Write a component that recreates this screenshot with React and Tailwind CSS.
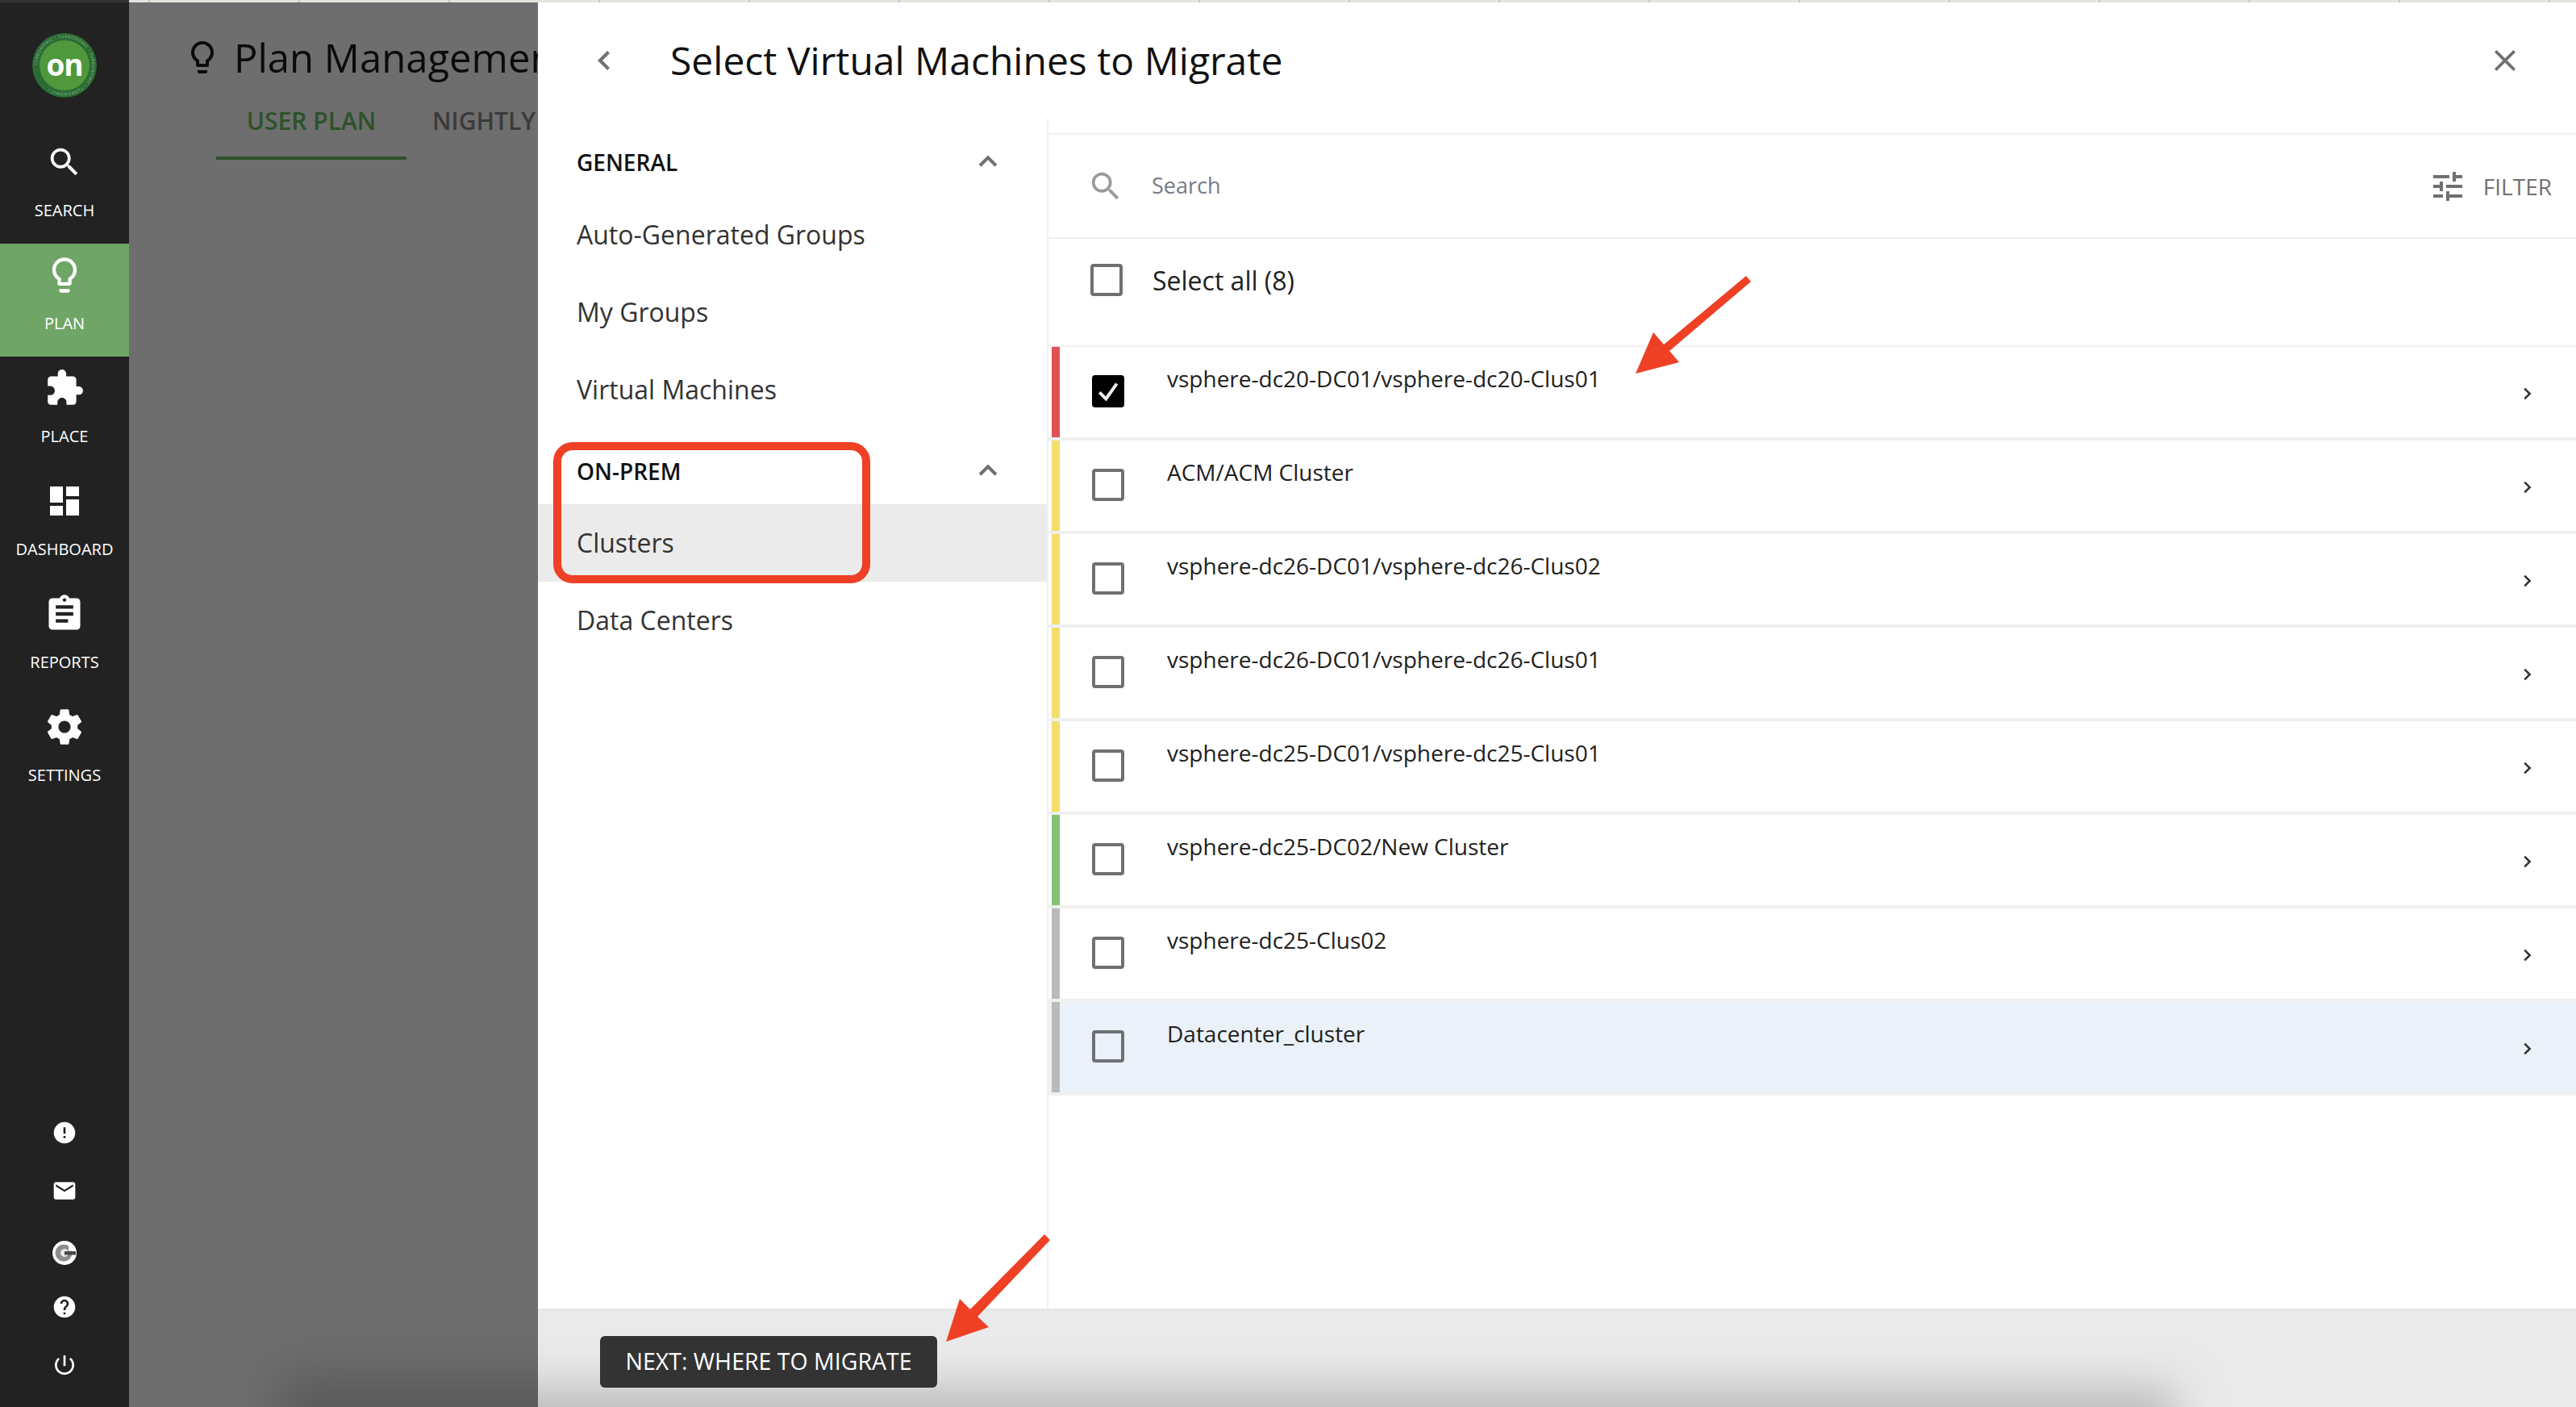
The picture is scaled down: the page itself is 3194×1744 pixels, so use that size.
const OS = { fontFamily: '"Open Sans", sans-serif' };

const P = {
  search: "M15.5 14h-.79l-.28-.27C15.41 12.59 16 11.11 16 9.5 16 5.91 13.09 3 9.5 3S3 5.91 3 9.5 5.91 16 9.5 16c1.61 0 3.09-.59 4.23-1.57l.27.28v.79l5 4.99L20.49 19l-4.99-5zm-6 0C7.01 14 5 11.99 5 9.5S7.01 5 9.5 5 14 7.01 14 9.5 11.99 14 9.5 14z",
  bulb: "M9 21c0 .55.45 1 1 1h4c.55 0 1-.45 1-1v-1H9v1zm3-19C8.14 2 5 5.14 5 9c0 2.38 1.19 4.47 3 5.74V17c0 .55.45 1 1 1h6c.55 0 1-.45 1-1v-2.26c1.81-1.27 3-3.36 3-5.74 0-3.86-3.14-7-7-7zm2.85 11.1l-.85.6V16h-4v-2.3l-.85-.6C7.8 12.16 7 10.63 7 9c0-2.76 2.24-5 5-5s5 2.24 5 5c0 1.63-.8 3.16-2.15 4.1z",
  puzzle: "M20.5 11H19V7c0-1.1-.9-2-2-2h-4V3.5C13 2.12 11.88 1 10.5 1S8 2.12 8 3.5V5H4c-1.1 0-1.99.9-1.99 2v3.8H3.5c1.49 0 2.7 1.21 2.7 2.7s-1.21 2.7-2.7 2.7H2V20c0 1.1.9 2 2 2h3.8v-1.5c0-1.49 1.21-2.7 2.7-2.7 1.49 0 2.7 1.21 2.7 2.7V22H17c1.1 0 2-.9 2-2v-4h1.5c1.38 0 2.5-1.12 2.5-2.5S21.88 11 20.5 11z",
  dash: "M3 13h8V3H3v10zm0 8h8v-6H3v6zm10 0h8V11h-8v10zm0-18v6h8V3h-8z",
  report: "M19 3h-4.18C14.4 1.84 13.3 1 12 1c-1.3 0-2.4.84-2.82 2H5c-1.1 0-2 .9-2 2v14c0 1.1.9 2 2 2h14c1.1 0 2-.9 2-2V5c0-1.1-.9-2-2-2zm-7 0c.55 0 1 .45 1 1s-.45 1-1 1-1-.45-1-1 .45-1 1-1zm2 14H7v-2h7v2zm3-4H7v-2h10v2zm0-4H7V7h10v2z",
  gear: "M19.43 12.98c.04-.32.07-.64.07-.98s-.03-.66-.07-.98l2.11-1.65c.19-.15.24-.42.12-.64l-2-3.46c-.12-.22-.39-.3-.61-.22l-2.49 1c-.52-.4-1.08-.73-1.69-.98l-.38-2.65C14.46 2.18 14.25 2 14 2h-4c-.25 0-.46.18-.49.42l-.38 2.65c-.61.25-1.17.59-1.69.98l-2.49-1c-.23-.09-.49 0-.61.22l-2 3.46c-.13.22-.07.49.12.64l2.11 1.65c-.04.32-.07.65-.07.98s.03.66.07.98l-2.11 1.65c-.19.15-.24.42-.12.64l2 3.46c.12.22.39.3.61.22l2.49-1c.52.4 1.08.73 1.69.98l.38 2.65c.03.24.24.42.49.42h4c.25 0 .46-.18.49-.42l.38-2.65c.61-.25 1.17-.59 1.69-.98l2.49 1c.23.09.49 0 .61-.22l2-3.46c.12-.22.07-.49-.12-.64l-2.11-1.65zM12 15.5c-1.93 0-3.5-1.57-3.5-3.5s1.57-3.5 3.5-3.5 3.5 1.57 3.5 3.5-1.57 3.5-3.5 3.5z",
  error: "M12 2C6.48 2 2 6.48 2 12s4.48 10 10 10 10-4.48 10-10S17.52 2 12 2zm1 15h-2v-2h2v2zm0-4h-2V7h2v6z",
  mail: "M20 4H4c-1.1 0-1.99.9-1.99 2L2 18c0 1.1.9 2 2 2h16c1.1 0 2-.9 2-2V6c0-1.1-.9-2-2-2zm0 4l-8 5-8-5V6l8 5 8-5v2z",
  help: "M12 2C6.48 2 2 6.48 2 12s4.48 10 10 10 10-4.48 10-10S17.52 2 12 2zm1 17h-2v-2h2v2zm2.07-7.75l-.9.92C13.45 12.9 13 13.5 13 15h-2v-.5c0-1.1.45-2.1 1.17-2.83l1.24-1.26c.37-.36.59-.86.59-1.41 0-1.1-.9-2-2-2s-2 .9-2 2H8c0-2.21 1.79-4 4-4s4 1.79 4 4c0 .88-.36 1.68-.93 2.25z",
  power: "M13 3h-2v10h2V3zm4.83 2.17l-1.42 1.42C17.99 7.86 19 9.81 19 12c0 3.87-3.13 7-7 7s-7-3.13-7-7c0-2.19 1.01-4.14 2.58-5.42L6.17 5.17C4.23 6.82 3 9.26 3 12c0 4.97 4.03 9 9 9s9-4.03 9-9c0-2.74-1.23-5.18-3.17-6.83z",
  tune: "M3 17v2h6v-2H3zM3 5v2h10V5H3zm10 16v-2h8v-2h-8v-2h-2v6h2zM7 9v2H3v2h4v2h2V9H7zm14 4v-2H11v2h10zm-6-4h2V7h4V5h-4V3h-2v6z",
};

function Ic({ d, size, className }) {
  return (
    <svg width={size} height={size} viewBox="0 0 24 24" fill="currentColor" className={`shrink-0 ${className || ""}`}>
      <path d={d} />
    </svg>
  );
}

function Chevron({ dir, size = 24, className }) {
  const pts = { left: "15,5 8,12 15,19", right: "9,5 16,12 9,19", up: "5,15 12,8 19,15" }[dir];
  return (
    <svg width={size} height={size} viewBox="0 0 24 24" fill="none" stroke="currentColor" strokeWidth="2.8" className={`shrink-0 ${className || ""}`}>
      <polyline points={pts} />
    </svg>
  );
}

function Logo() {
  return (
    <svg width="84" height="84" viewBox="0 0 84 84" className="block">
      <defs>
        <path id="ringp" d="M42 42 m-34 0 a34 34 0 1 1 68 0 a34 34 0 1 1 -68 0" />
      </defs>
      <circle cx="42" cy="42" r="40" fill="#2c6b35" />
      <circle cx="42" cy="42" r="31" fill="#4f983c" />
      <text fontSize="5" fill="#8fbe8e" letterSpacing="0.6" style={OS}>
        <textPath href="#ringp">TURBONOMIC • TURBONOMIC • TURBONOMIC • TURBONOMIC •</textPath>
      </text>
      <text x="42" y="55" textAnchor="middle" fontSize="37" fontWeight="700" letterSpacing="-1" fill="#fff" style={OS}>on</text>
    </svg>
  );
}

function NavItem({ d, label, size = 44, active }) {
  return (
    <div className={`h-[140px] flex flex-col items-center pt-[13px] text-white ${active ? "bg-[#6fa566]" : ""}`}>
      <div className="h-[52px] flex items-center justify-center"><Ic d={d} size={size} /></div>
      <div className="mt-[20px] text-[20px] leading-[28px]">{label}</div>
    </div>
  );
}

const rows = [
  ["vsphere-dc20-DC01/vsphere-dc20-Clus01", "bg-[#dc5350]", true],
  ["ACM/ACM Cluster", "bg-[#f3de6d]"],
  ["vsphere-dc26-DC01/vsphere-dc26-Clus02", "bg-[#f3de6d]"],
  ["vsphere-dc26-DC01/vsphere-dc26-Clus01", "bg-[#f3de6d]"],
  ["vsphere-dc25-DC01/vsphere-dc25-Clus01", "bg-[#f3de6d]"],
  ["vsphere-dc25-DC02/New Cluster", "bg-[#84c174]"],
  ["vsphere-dc25-Clus02", "bg-[#bababa]"],
  ["Datacenter_cluster", "bg-[#bababa]", false, true],
];

function Check({ checked }) {
  if (checked) {
    return (
      <div className="w-[40px] h-[40px] rounded-[4px] bg-black flex items-center justify-center">
        <svg width="32" height="32" viewBox="0 0 24 24" fill="none" stroke="#f0f0f0" strokeWidth="3"><polyline points="4,13 10,19 20,5" /></svg>
      </div>
    );
  }
  return <div className="w-[40px] h-[40px] rounded-[4px] border-[4px] border-[#6f7072]" />;
}

function Row({ name, bar, checked, hot }) {
  return (
    <div className={`h-[116px] flex pl-[4px] border-b-[4px] border-[#f0f0f0] ${hot ? "bg-[#eaf1f8]" : ""}`}>
      <div className={`w-[10px] h-[112px] ${bar}`} />
      <div className="ml-[40px] mt-[35px]"><Check checked={checked} /></div>
      <div className="ml-[53px] mt-[20px] text-[28px] leading-[38px] text-[#212121] flex-1">{name}</div>
      <Chevron dir="right" size={22} className="mt-[47px] mr-[50px] text-[#333]" />
    </div>
  );
}

const ticks = Array.from({ length: 18 }, (_, i) => i);

export default function App() {
  return (
    <div className="relative w-[3194px] h-[1744px] overflow-hidden flex bg-white" style={OS}>
      <div className="w-[160px] shrink-0 bg-[#222222] flex flex-col">
        <div className="h-[162px] flex justify-center pt-[39px]"><Logo /></div>
        <NavItem d={P.search} label="SEARCH" size={46} />
        <NavItem d={P.bulb} label="PLAN" size={52} active />
        <NavItem d={P.puzzle} label="PLACE" size={50} />
        <NavItem d={P.dash} label="DASHBOARD" size={48} />
        <NavItem d={P.report} label="REPORTS" size={52} />
        <NavItem d={P.gear} label="SETTINGS" size={52} />
        <div className="flex-1" />
        <div className="flex flex-col items-center text-white pb-[36px]">
          <Ic d={P.error} size={32} />
          <Ic d={P.mail} size={32} className="mt-[40px]" />
          <svg width="34" height="34" viewBox="0 0 34 34" className="mt-[44px]">
            <circle cx="17" cy="17" r="15" fill="#fff" />
            <circle cx="16" cy="17" r="10.5" fill="#8d8d8d" />
            <circle cx="17" cy="17" r="5" fill="#e8e8e8" />
            <rect x="17" y="15" width="14" height="4.5" fill="#4a4a4a" />
            <rect x="22" y="9" width="8" height="5.5" fill="#fff" />
          </svg>
          <Ic d={P.help} size={32} className="mt-[34px]" />
          <Ic d={P.power} size={32} className="mt-[40px]" />
        </div>
      </div>

      <div className="relative w-[507px] shrink-0 bg-[#6e6e6e] overflow-hidden">
        <div className="flex items-center pl-[67px] pt-[38px] h-[104px]">
          <Ic d={P.bulb} size={48} className="text-[#0b0b0b]" />
          <div className="ml-[15px] text-[49px] leading-[60px] text-[#0b0b0b] whitespace-nowrap">Plan Management</div>
        </div>
        <div className="flex pl-[108px] text-[30px] font-semibold whitespace-nowrap">
          <div className="w-[236px] h-[94px] pt-[22px] border-b-[4px] border-[#2c5229] text-center text-[#2c5229] leading-[48px] shrink-0">USER PLAN</div>
          <div className="ml-[32px] pt-[22px] text-[#3a3a3a] leading-[48px]">NIGHTLY PLAN</div>
        </div>
        <div className="absolute -right-[80px] -bottom-[60px] w-[400px] h-[100px] bg-[#5a5a5a] blur-[30px]" />
      </div>

      <div className="w-[2527px] shrink-0 flex flex-col">
        <div className="h-[147px] flex items-center pt-[2px]">
          <Chevron dir="left" size={36} className="ml-[65px] text-[#6f7072]" />
          <div className="ml-[63px] flex-1 text-[48px] leading-[64px] text-[#111]">Select Virtual Machines to Migrate</div>
          <svg width="40" height="40" viewBox="0 0 24 24" fill="none" stroke="#707070" strokeWidth="2.2" className="mr-[68px]"><path d="M5 5l14 14M19 5L5 19" /></svg>
        </div>
        <div className="flex-1 flex min-h-0">
          <div className="w-[633px] border-r-[2px] border-[#f0f0f0] shrink-0">
            <div className="h-[96px] flex items-center pl-[48px] pr-[56px] pt-[12px] justify-between">
              <div className="text-[28px] font-semibold text-[#111]">GENERAL</div>
              <Chevron dir="up" size={34} className="text-[#6f7072]" />
            </div>
            <div className="h-[96px] flex items-center pl-[48px] text-[32px] text-[#333]">Auto-Generated Groups</div>
            <div className="h-[96px] flex items-center pl-[48px] text-[32px] text-[#333]">My Groups</div>
            <div className="h-[96px] flex items-center pl-[48px] text-[32px] text-[#333]">Virtual Machines</div>
            <div className="h-[94px] flex items-center pl-[48px] pr-[56px] pt-[12px] justify-between">
              <div className="text-[28px] font-semibold text-[#111]">ON-PREM</div>
              <Chevron dir="up" size={34} className="text-[#6f7072]" />
            </div>
            <div className="h-[96px] flex items-center pl-[48px] text-[32px] text-[#333] bg-[#ebebeb]">Clusters</div>
            <div className="h-[96px] flex items-center pl-[48px] text-[32px] text-[#333]">Data Centers</div>
          </div>
          <div className="flex-1 min-w-0">
            <div className="h-[20px] border-b-[2px] border-[#f0f0f0]" />
            <div className="h-[129px] flex items-center border-b-[2px] border-[#f0f0f0] pl-[48px]">
              <Ic d={P.search} size={46} className="text-[#9a9a9a]" />
              <div className="ml-[34px] flex-1 text-[27px] text-[#767b85]">Search</div>
              <Ic d={P.tune} size={48} className="text-[#707070]" />
              <div className="ml-[20px] mr-[30px] text-[28px] text-[#707070]">FILTER</div>
            </div>
            <div className="h-[134px] flex pl-[52px] border-b-[2px] border-[#f0f0f0]">
              <div className="mt-[31px]"><Check /></div>
              <div className="ml-[37px] mt-[31px] text-[32px] leading-[42px] text-[#212121]">Select all (8)</div>
            </div>
            {rows.map(([name, bar, checked, hot]) => (
              <Row key={name} name={name} bar={bar} checked={checked} hot={hot} />
            ))}
          </div>
        </div>
        <div className="relative h-[122px] shrink-0 bg-[#eaeaea] border-t-[2px] border-[#e4e4e4] flex pl-[77px] pt-[32px] overflow-hidden">
          <div className="absolute -left-[100px] -bottom-[60px] w-[2130px] h-[85px] bg-[#bcbcbc] blur-[26px]" />
          <div className="relative w-[418px] h-[64px] rounded-[6px] bg-[#333333] text-white text-[28.5px] flex items-center justify-center pb-[2px]">NEXT: WHERE TO MIGRATE</div>
        </div>
      </div>

      <div className="absolute left-0 top-0 w-[3194px] h-[3px] flex bg-[#e6e2de]">
        {ticks.map((i) => (
          <div key={i} className="w-[186px] h-[3px] border-r-[2px] border-[#c9c5c1] shrink-0" />
        ))}
      </div>
      <div className="absolute left-0 top-0 w-[160px] h-[3px] bg-[#333]" />

      <div className="absolute left-[686px] top-[548px] w-[393px] h-[175px] rounded-[24px] border-[10px] border-[#ee4025]" />
      <svg className="absolute left-0 top-0 pointer-events-none" width="3194" height="1744" viewBox="0 0 3194 1744" fill="#ee4025">
        <polygon points="2165,342 2171,349 2070,435 2082,449 2028,463 2050,412 2063,427" />
        <polygon points="1295,1530 1302,1537 1212,1632 1226,1645 1173,1663 1190,1610 1203,1623" />
      </svg>
    </div>
  );
}
